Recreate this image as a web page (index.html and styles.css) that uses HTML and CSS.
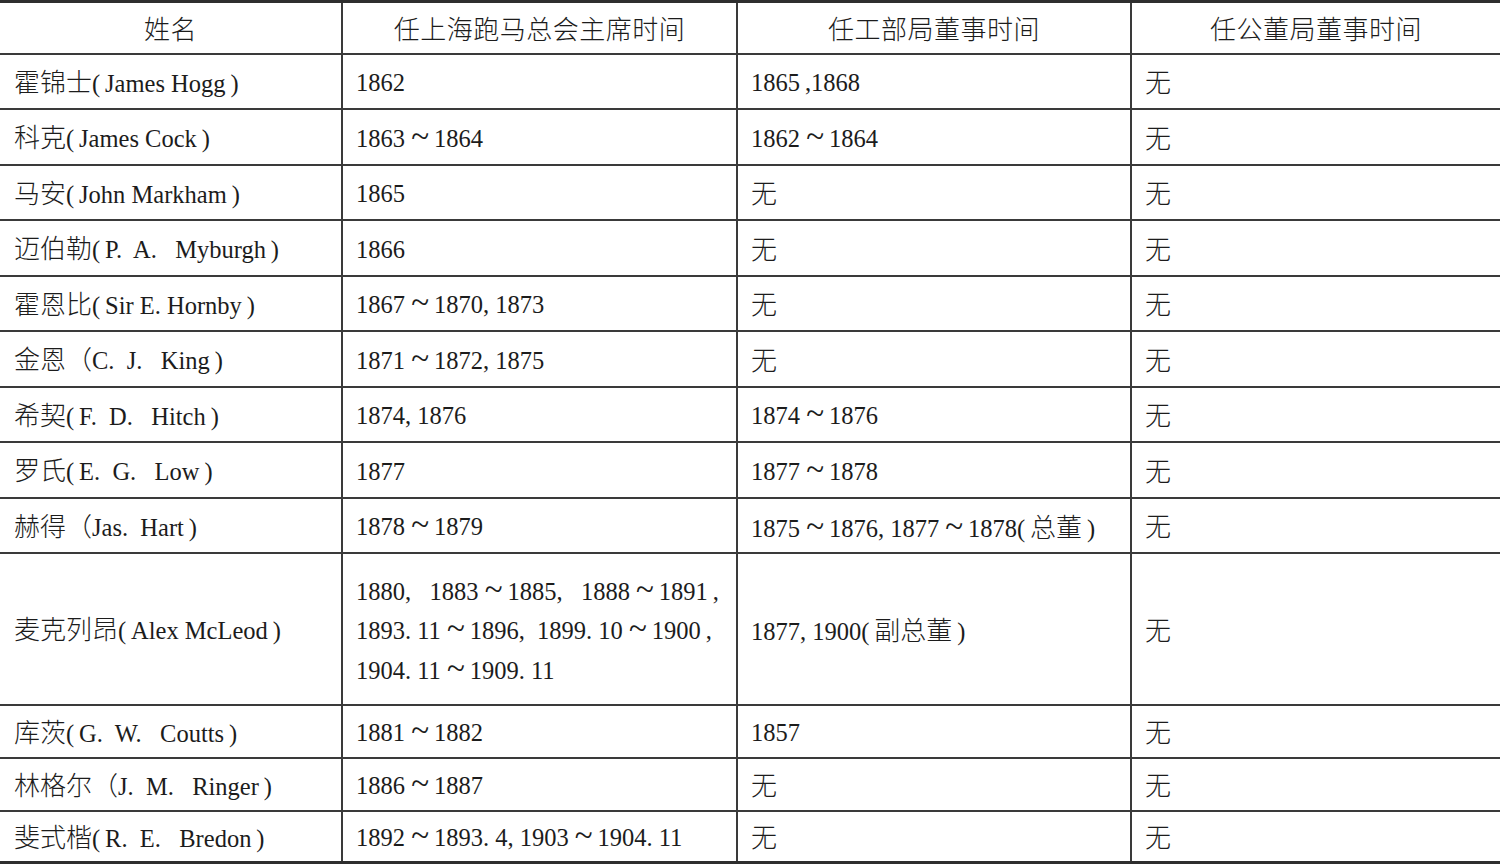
FILE: index.html
```html
<!DOCTYPE html>
<html lang="zh-CN">
<head>
<meta charset="utf-8">
<title>上海跑马总会主席</title>
<link rel="stylesheet" href="styles.css">
</head>
<body>
<table class="tbl">
  <colgroup>
    <col class="c1"><col class="c2"><col class="c3"><col class="c4">
  </colgroup>
  <thead>
    <tr class="head">
      <th>姓名</th>
      <th>任上海跑马总会主席时间</th>
      <th>任工部局董事时间</th>
      <th>任公董局董事时间</th>
    </tr>
  </thead>
  <tbody>
    <tr>
      <td><span class="zh">霍锦士</span>(&#8201;James Hogg&#8201;)</td>
      <td>1862</td>
      <td>1865&#8201;,1868</td>
      <td class="zh">无</td>
    </tr>
    <tr>
      <td><span class="zh">科克</span>(&#8201;James Cock&#8201;)</td>
      <td>1863 <span class="t">~</span>&#8201;1864</td>
      <td>1862 <span class="t">~</span>&#8201;1864</td>
      <td class="zh">无</td>
    </tr>
    <tr>
      <td><span class="zh">马安</span>(&#8201;John Markham&#8201;)</td>
      <td>1865</td>
      <td class="zh">无</td>
      <td class="zh">无</td>
    </tr>
    <tr>
      <td><span class="zh">迈伯勒</span>(&#8201;P.&nbsp; A.&nbsp;&nbsp; Myburgh&#8201;)</td>
      <td>1866</td>
      <td class="zh">无</td>
      <td class="zh">无</td>
    </tr>
    <tr>
      <td><span class="zh">霍恩比</span>(&#8201;Sir E. Hornby&#8201;)</td>
      <td>1867 <span class="t">~</span>&#8201;1870, 1873</td>
      <td class="zh">无</td>
      <td class="zh">无</td>
    </tr>
    <tr>
      <td><span class="zh">金恩（</span>C.&nbsp; J.&nbsp;&nbsp; King&#8201;)</td>
      <td>1871 <span class="t">~</span>&#8201;1872, 1875</td>
      <td class="zh">无</td>
      <td class="zh">无</td>
    </tr>
    <tr>
      <td><span class="zh">希契</span>(&#8201;F.&nbsp; D.&nbsp;&nbsp; Hitch&#8201;)</td>
      <td>1874, 1876</td>
      <td>1874 <span class="t">~</span>&#8201;1876</td>
      <td class="zh">无</td>
    </tr>
    <tr>
      <td><span class="zh">罗氏</span>(&#8201;E.&nbsp; G.&nbsp;&nbsp; Low&#8201;)</td>
      <td>1877</td>
      <td>1877 <span class="t">~</span>&#8201;1878</td>
      <td class="zh">无</td>
    </tr>
    <tr>
      <td><span class="zh">赫得（</span>Jas.&nbsp; Hart&#8201;)</td>
      <td>1878 <span class="t">~</span>&#8201;1879</td>
      <td>1875 <span class="t">~</span>&#8201;1876, 1877 <span class="t">~</span>&#8201;1878(&#8201;<span class="zh">总董</span>&#8201;)</td>
      <td class="zh">无</td>
    </tr>
    <tr class="tall">
      <td><span class="zh">麦克列昂</span>(&#8201;Alex McLeod&#8201;)</td>
      <td class="lines">1880,&nbsp;&nbsp; 1883 <span class="t">~</span>&#8201;1885,&nbsp;&nbsp; 1888 <span class="t">~</span>&#8201;1891&#8201;,<br>1893.&nbsp;11 <span class="t">~</span>&#8201;1896,&nbsp; 1899.&nbsp;10 <span class="t">~</span>&#8201;1900&#8201;,<br>1904.&nbsp;11 <span class="t">~</span>&#8201;1909.&nbsp;11</td>
      <td>1877, 1900(&#8201;<span class="zh">副总董</span>&#8201;)</td>
      <td class="zh">无</td>
    </tr>
    <tr class="short">
      <td><span class="zh">库茨</span>(&#8201;G.&nbsp; W.&nbsp;&nbsp; Coutts&#8201;)</td>
      <td>1881 <span class="t">~</span>&#8201;1882</td>
      <td>1857</td>
      <td class="zh">无</td>
    </tr>
    <tr class="short">
      <td><span class="zh">林格尔（</span>J.&nbsp; M.&nbsp;&nbsp; Ringer&#8201;)</td>
      <td>1886 <span class="t">~</span>&#8201;1887</td>
      <td class="zh">无</td>
      <td class="zh">无</td>
    </tr>
    <tr class="last">
      <td><span class="zh">斐式楷</span>(&#8201;R.&nbsp; E.&nbsp;&nbsp; Bredon&#8201;)</td>
      <td>1892 <span class="t">~</span>&#8201;1893.&nbsp;4, 1903 <span class="t">~</span>&#8201;1904.&nbsp;11</td>
      <td class="zh">无</td>
      <td class="zh">无</td>
    </tr>
  </tbody>
</table>
</body>
</html>
```

FILE: styles.css
```css
html, body {
  margin: 0;
  padding: 0;
  background: #ffffff;
}

.tbl {
  width: 1500px;
  border-collapse: collapse;
  table-layout: fixed;
  font-family: "Liberation Serif", "Noto Sans CJK SC", serif;
  font-size: 24.5px;
  color: #1c1c1c;
  border-top: 3px solid #2e2e2e;
  border-bottom: 3px solid #2e2e2e;
}

.c1 { width: 342px; }
.c2 { width: 395px; }
.c3 { width: 394px; }
.c4 { width: 369px; }

.tbl th,
.tbl td {
  border-top: 2px solid #3a3a3a;
  border-bottom: 2px solid #3a3a3a;
  border-left: 2px solid #3a3a3a;
  padding: 4px 0 0 13px;
  text-align: left;
  vertical-align: middle;
  white-space: nowrap;
  line-height: 30px;
}

.tbl td:first-child {
  border-left: none;
  padding: 2px 0 0 14px;
}

.tbl td.zh {
  padding-top: 0;
}

.tbl th {
  font-family: "Noto Sans CJK SC", sans-serif;
  font-weight: 300;
  font-size: 26px;
  text-align: center;
  padding: 0;
  letter-spacing: 0.5px;
}

.tbl th:first-child {
  border-left: none;
}

.head { height: 52px; }

.tbl tbody tr { height: 55.5px; }
.tbl tbody tr.tall { height: 151.5px; }
.tbl tbody tr.short { height: 53px; }
.tbl tbody tr.last { height: 52px; }

.zh {
  font-family: "Noto Sans CJK SC", sans-serif;
  font-weight: 300;
  font-size: 26px;
}

.t {
  font-size: 33px;
  line-height: 0;
}

.tbl td.lines {
  line-height: 39.5px;
}
```
